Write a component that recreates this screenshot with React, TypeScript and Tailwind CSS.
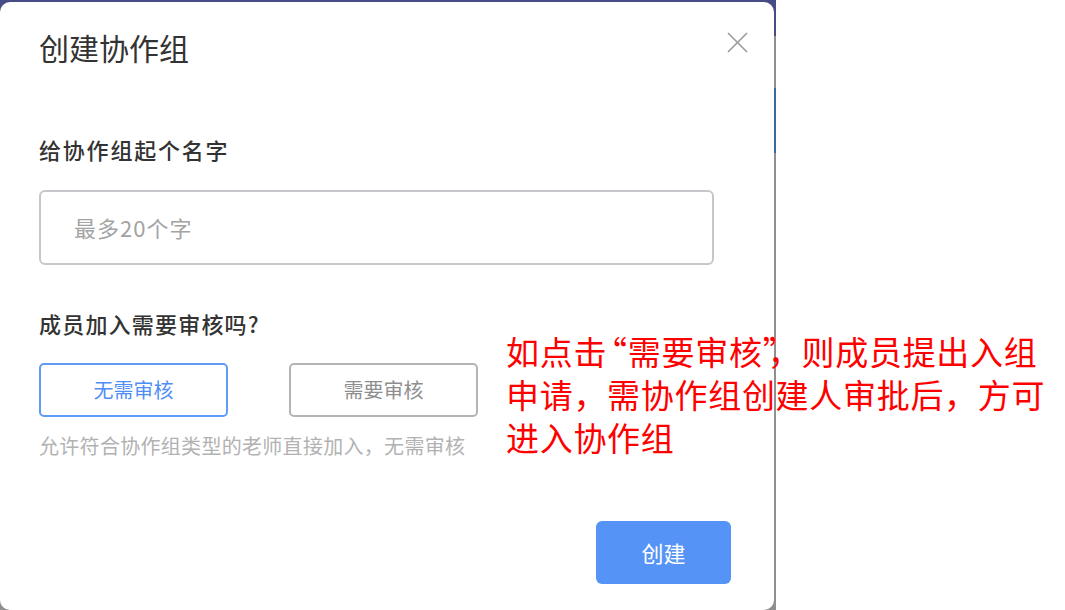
import React from "react";

const CJK = '"Noto Sans CJK SC", "Noto Sans", sans-serif';

export default function App() {
  return (
    <div
      className="relative w-[1065px] h-[610px] bg-white flex overflow-hidden"
      style={{ fontFamily: CJK }}
      lang="zh-CN"
    >
      {/* backdrop */}
      <div className="flex w-[776px] h-[610px] bg-[linear-gradient(#484c86_0px,#484c86_36px,#8f8f8f_36px,#8f8f8f_88px,#3d66a8_88px,#3d66a8_153px,#8f8f8f_153px)] pt-[2px] pr-[2px]">
        {/* dialog */}
        <div className="flex flex-col w-[774px] h-[608px] bg-white rounded-[10px] pl-[39px]">
          <div className="flex justify-between items-start pt-[25px] pr-[26px]">
            <div className="h-[40px] leading-[40px] text-[30px] text-[#333333]">创建协作组</div>
            <svg width="21" height="21" viewBox="0 0 21 21" className="mt-[5px]">
              <path d="M1 1 L20 20 M20 1 L1 20" stroke="#9a9a9a" strokeWidth="1.6" fill="none" />
            </svg>
          </div>

          <div className="mt-[67px] h-[30px] leading-[30px] text-[22px] tracking-[1.8px] font-medium text-[#333333]">
            给协作组起个名字
          </div>

          <div className="mt-[26px] w-[675px] h-[75px] border-2 border-[#c6c7cc] rounded-[6px] flex items-center pl-[33px]">
            <span className="text-[22px] tracking-[1px] text-[#a3a3a3]">最多20个字</span>
          </div>

          <div className="mt-[43px] h-[30px] leading-[30px] text-[22px] tracking-[1.2px] font-medium text-[#333333]">
            成员加入需要审核吗?
          </div>

          <div className="mt-[25px] flex gap-[61px]">
            <div className="w-[189px] h-[54px] border-2 border-[#5e9cf7] rounded-[5px] flex items-center justify-center text-[20px] text-[#4f8ef5]">
              无需审核
            </div>
            <div className="w-[189px] h-[54px] border-2 border-[#b4b4b8] rounded-[5px] flex items-center justify-center text-[20px] text-[#8e8e8e]">
              需要审核
            </div>
          </div>

          <div className="mt-[15px] h-[28px] leading-[28px] text-[20px] tracking-[0.3px] text-[#b2b2b2]">
            允许符合协作组类型的老师直接加入，无需审核
          </div>

          <div className="mt-[61px] self-end mr-[43px] w-[135px] h-[63px] bg-[#5594f6] rounded-[6px] flex items-center justify-center text-[22px] text-white">
            创建
          </div>
        </div>
      </div>

      {/* annotation */}
      <div className="absolute left-[506px] top-[330px] whitespace-nowrap text-[33px] tracking-[0.7px] leading-[43px] text-[#ff0000]">
        <div>
          如点击<span className="ml-[-13px]">“</span>需要审核<span className="mr-[-12px]">”</span>，则成员提出入组
        </div>
        <div>申请，需协作组创建人审批后，方可</div>
        <div>进入协作组</div>
      </div>
    </div>
  );
}
